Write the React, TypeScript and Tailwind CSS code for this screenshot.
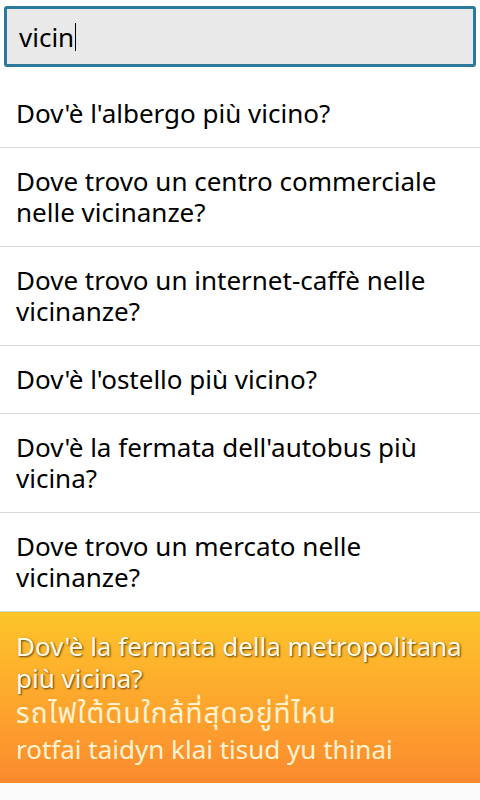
import React from 'react';

const ITEMS = [
  "Dov'è l'albergo più vicino?",
  'Dove trovo un centro commerciale nelle vicinanze?',
  'Dove trovo un internet-caffè nelle vicinanze?',
  "Dov'è l'ostello più vicino?",
  "Dov'è la fermata dell'autobus più vicina?",
  'Dove trovo un mercato nelle vicinanze?',
];

export default function App() {
  return (
    <div className="flex h-[800px] w-[480px] flex-col overflow-hidden bg-white font-['Noto_Sans',sans-serif] text-black">
      {/* Search box */}
      <div className="px-[4px] pt-[6px] pb-[13px]">
        <div className="flex h-[61px] items-center rounded-[3px] border-[3px] border-[#2b7a9e] bg-[#e9e9e9] px-[12px]">
          <span className="text-[26px] leading-none">vicin</span>
          <span className="ml-[1px] h-[28px] w-[1px] bg-black" />
        </div>
      </div>

      {/* Results */}
      <div className="flex flex-col">
        {ITEMS.map((text) => (
          <div
            key={text}
            className="border-b border-[#d9d9d9] px-[16px] py-[18px] text-[26px] leading-[31px]"
          >
            {text}
          </div>
        ))}

        {/* Selected row */}
        <div className="bg-gradient-to-b from-[#fdc52a] to-[#fb8a2e] px-[16px] pt-[18px] pb-[16px]">
          <div className="text-[26px] leading-[32px] text-[#fffbea] [text-shadow:1px_1px_2px_rgba(50,30,0,0.8)]">
            Dov'è la fermata della metropolitana più vicina?
          </div>
          <div className="font-['Noto_Sans','Noto_Sans_Thai','DejaVu_Sans',sans-serif] text-[28px] leading-[37px] tracking-[1px] text-[#fff3d2]">
            รถไฟใต้ดินใกล้ที่สุดอยู่ที่ไหน
          </div>
          <div className="text-[26px] leading-[36px] text-[#fff3d2]">
            rotfai taidyn klai tisud yu thinai
          </div>
        </div>
      </div>
      <div className="flex-1 bg-[#fbfbfb]" />
    </div>
  );
}
